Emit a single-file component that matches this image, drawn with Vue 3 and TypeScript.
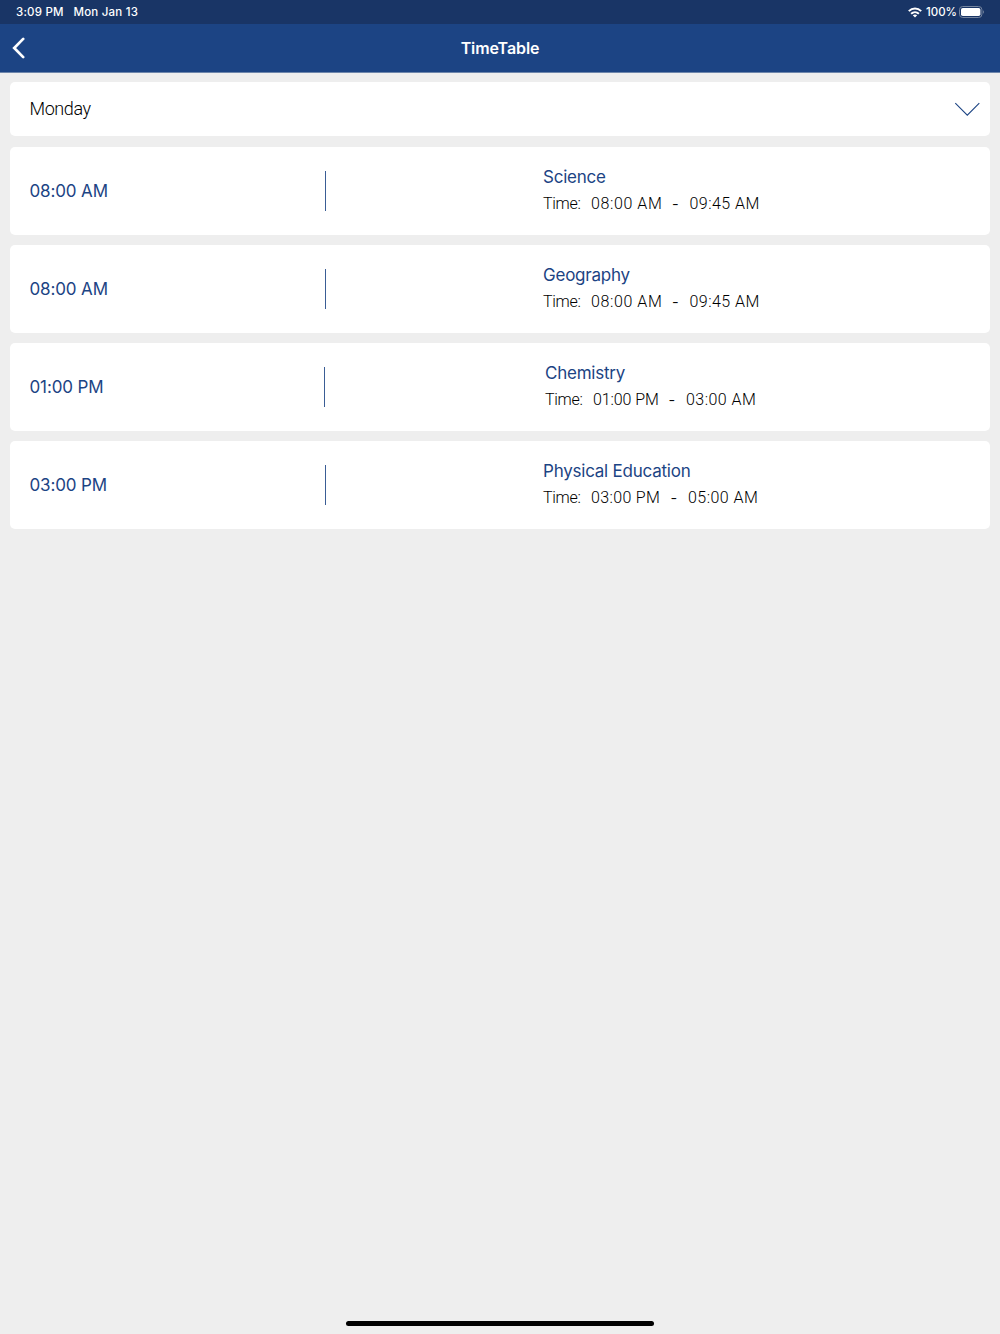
<script setup lang="ts">
interface Lesson {
  subject: string
  start: string
  end: string
  inset: number
  divider: number
  startWidth: number
  startTracking: number
}

const day = 'Monday'
const lessons: Lesson[] = [
  { subject: 'Science', start: '08:00 AM', end: '09:45 AM', inset: 533, divider: 315, startWidth: 81.5, startTracking: 0.6 },
  { subject: 'Geography', start: '08:00 AM', end: '09:45 AM', inset: 533, divider: 315, startWidth: 81.5, startTracking: 0.6 },
  { subject: 'Chemistry', start: '01:00 PM', end: '03:00 AM', inset: 535, divider: 314, startWidth: 76, startTracking: -0.1 },
  { subject: 'Physical Education', start: '03:00 PM', end: '05:00 AM', inset: 533, divider: 315, startWidth: 80, startTracking: 0.35 },
]
</script>

<template>
  <div class="screen">
    <div class="status">
      <span class="clock">3:09 PM</span>
      <span class="date">Mon Jan 13</span>
      <svg class="wifi" width="14" height="11" viewBox="0 0 14 11">
        <g fill="none" stroke="#fff" stroke-width="2">
          <path d="M0.8 4.1C4.4 0.5 9.6 0.5 13.2 4.1" />
          <path d="M3.1 6.7C5.3 4.6 8.7 4.6 10.9 6.7" />
        </g>
        <path d="M4.8 8.3C6.1 7.2 7.9 7.2 9.2 8.3L7 10.6Z" fill="#fff" />
      </svg>
      <span class="percent">100%</span>
      <svg class="battery" width="26" height="12" viewBox="0 0 26 12">
        <rect x="0.5" y="0.5" width="22.4" height="11" rx="3.2" fill="none" stroke="#75859f" />
        <rect x="2" y="2" width="19.4" height="8" rx="1.8" fill="#fff" />
        <path d="M24.1 4.2C25.4 4.8 25.4 7.2 24.1 7.8Z" fill="#75859f" />
      </svg>
    </div>
    <header class="nav">
      <svg class="back" width="14" height="22" viewBox="0 0 14 22">
        <path d="M11.2 1.9L2.2 11L11.2 20.1" fill="none" stroke="#fff" stroke-width="2.7" stroke-linecap="round" stroke-linejoin="miter" />
      </svg>
      <h1>TimeTable</h1>
    </header>
    <main>
      <div class="card picker">
        <span class="day">{{ day }}</span>
        <svg width="26" height="15" viewBox="0 0 26 15">
          <path d="M1.3 1.2L13.3 13.2L25.3 1.2" fill="none" stroke="#1c4484" stroke-width="1.1" />
        </svg>
      </div>
      <div v-for="lesson in lessons" :key="lesson.subject" class="card lesson">
        <div class="begin" :style="{ width: lesson.divider + 'px' }">{{ lesson.start }}</div>
        <div class="divider"></div>
        <div class="details" :style="{ marginLeft: lesson.inset - lesson.divider - 1 + 'px' }">
          <div class="subject">{{ lesson.subject }}</div>
          <div class="times">
            <span class="label">Time:</span>
            <span :style="{ width: lesson.startWidth + 'px', letterSpacing: lesson.startTracking + 'px' }">{{ lesson.start }}</span>
            <span class="dash">-</span>
            <span class="end">{{ lesson.end }}</span>
          </div>
        </div>
      </div>
    </main>
    <div class="home"></div>
  </div>
</template>

<style>
body {
  margin: 0;
}
</style>

<style scoped>
.screen {
  box-sizing: border-box;
  width: 1000px;
  height: 1334px;
  display: flex;
  flex-direction: column;
  overflow: hidden;
  background: #eee;
  font-family: Inter, "Liberation Sans", sans-serif;
}
.status {
  box-sizing: border-box;
  height: 24px;
  flex: none;
  display: flex;
  align-items: center;
  padding: 0 15px 0 16px;
  background: #193566;
  color: #fff;
  font-size: 11.5px;
  font-weight: 500;
  white-space: nowrap;
}
.clock {
  width: 57.5px;
  letter-spacing: 0.2px;
}
.date {
  letter-spacing: 0.2px;
}
.wifi {
  margin-left: auto;
  margin-right: 4px;
}
.percent {
  width: 33px;
}
.nav {
  box-sizing: border-box;
  height: 49px;
  flex: none;
  display: grid;
  grid-template-columns: 30px 1fr 30px;
  align-items: center;
  padding: 0 11px;
  background: #1c4484;
  border-bottom: 1px solid #6e86ab;
}
.back {
  margin-left: 1px;
}
h1 {
  margin: 0;
  text-align: center;
  color: #fff;
  font-size: 16px;
  font-weight: 600;
  line-height: 20px;
  letter-spacing: -0.1px;
}
main {
  flex: 1;
  display: flex;
  flex-direction: column;
  gap: 10px;
  padding: 9px 10px 0;
}
.card {
  box-sizing: border-box;
  display: flex;
  flex: none;
  background: #fff;
  border-radius: 5px;
}
.picker {
  height: 54px;
  margin-bottom: 1px;
  align-items: center;
  justify-content: space-between;
  padding: 0 10px 0 19.5px;
}
.day {
  font: 300 18px/22px Roboto, sans-serif;
  color: #000;
  letter-spacing: -0.4px;
}
.lesson {
  height: 88px;
  align-items: center;
}
.begin {
  box-sizing: border-box;
  padding-left: 19.5px;
  color: #1c4484;
  font-size: 17px;
  letter-spacing: -0.13px;
}
.divider {
  width: 1px;
  height: 40px;
  background: #3a5d95;
}
.details {
  white-space: nowrap;
}
.subject {
  color: #1c4484;
  font-size: 17px;
  line-height: 25px;
  padding-bottom: 1px;
  letter-spacing: -0.23px;
}
.times {
  display: flex;
  font: 300 16px/26px Roboto, sans-serif;
  color: #000;
}
.label {
  width: 48px;
  letter-spacing: -0.3px;
}
.dash {
  width: 17px;
  font-size: 20px;
}
.end {
  letter-spacing: 0.45px;
}
.home {
  width: 308px;
  height: 5px;
  flex: none;
  margin: 0 auto 8px;
  border-radius: 3px;
  background: #000;
}
</style>
